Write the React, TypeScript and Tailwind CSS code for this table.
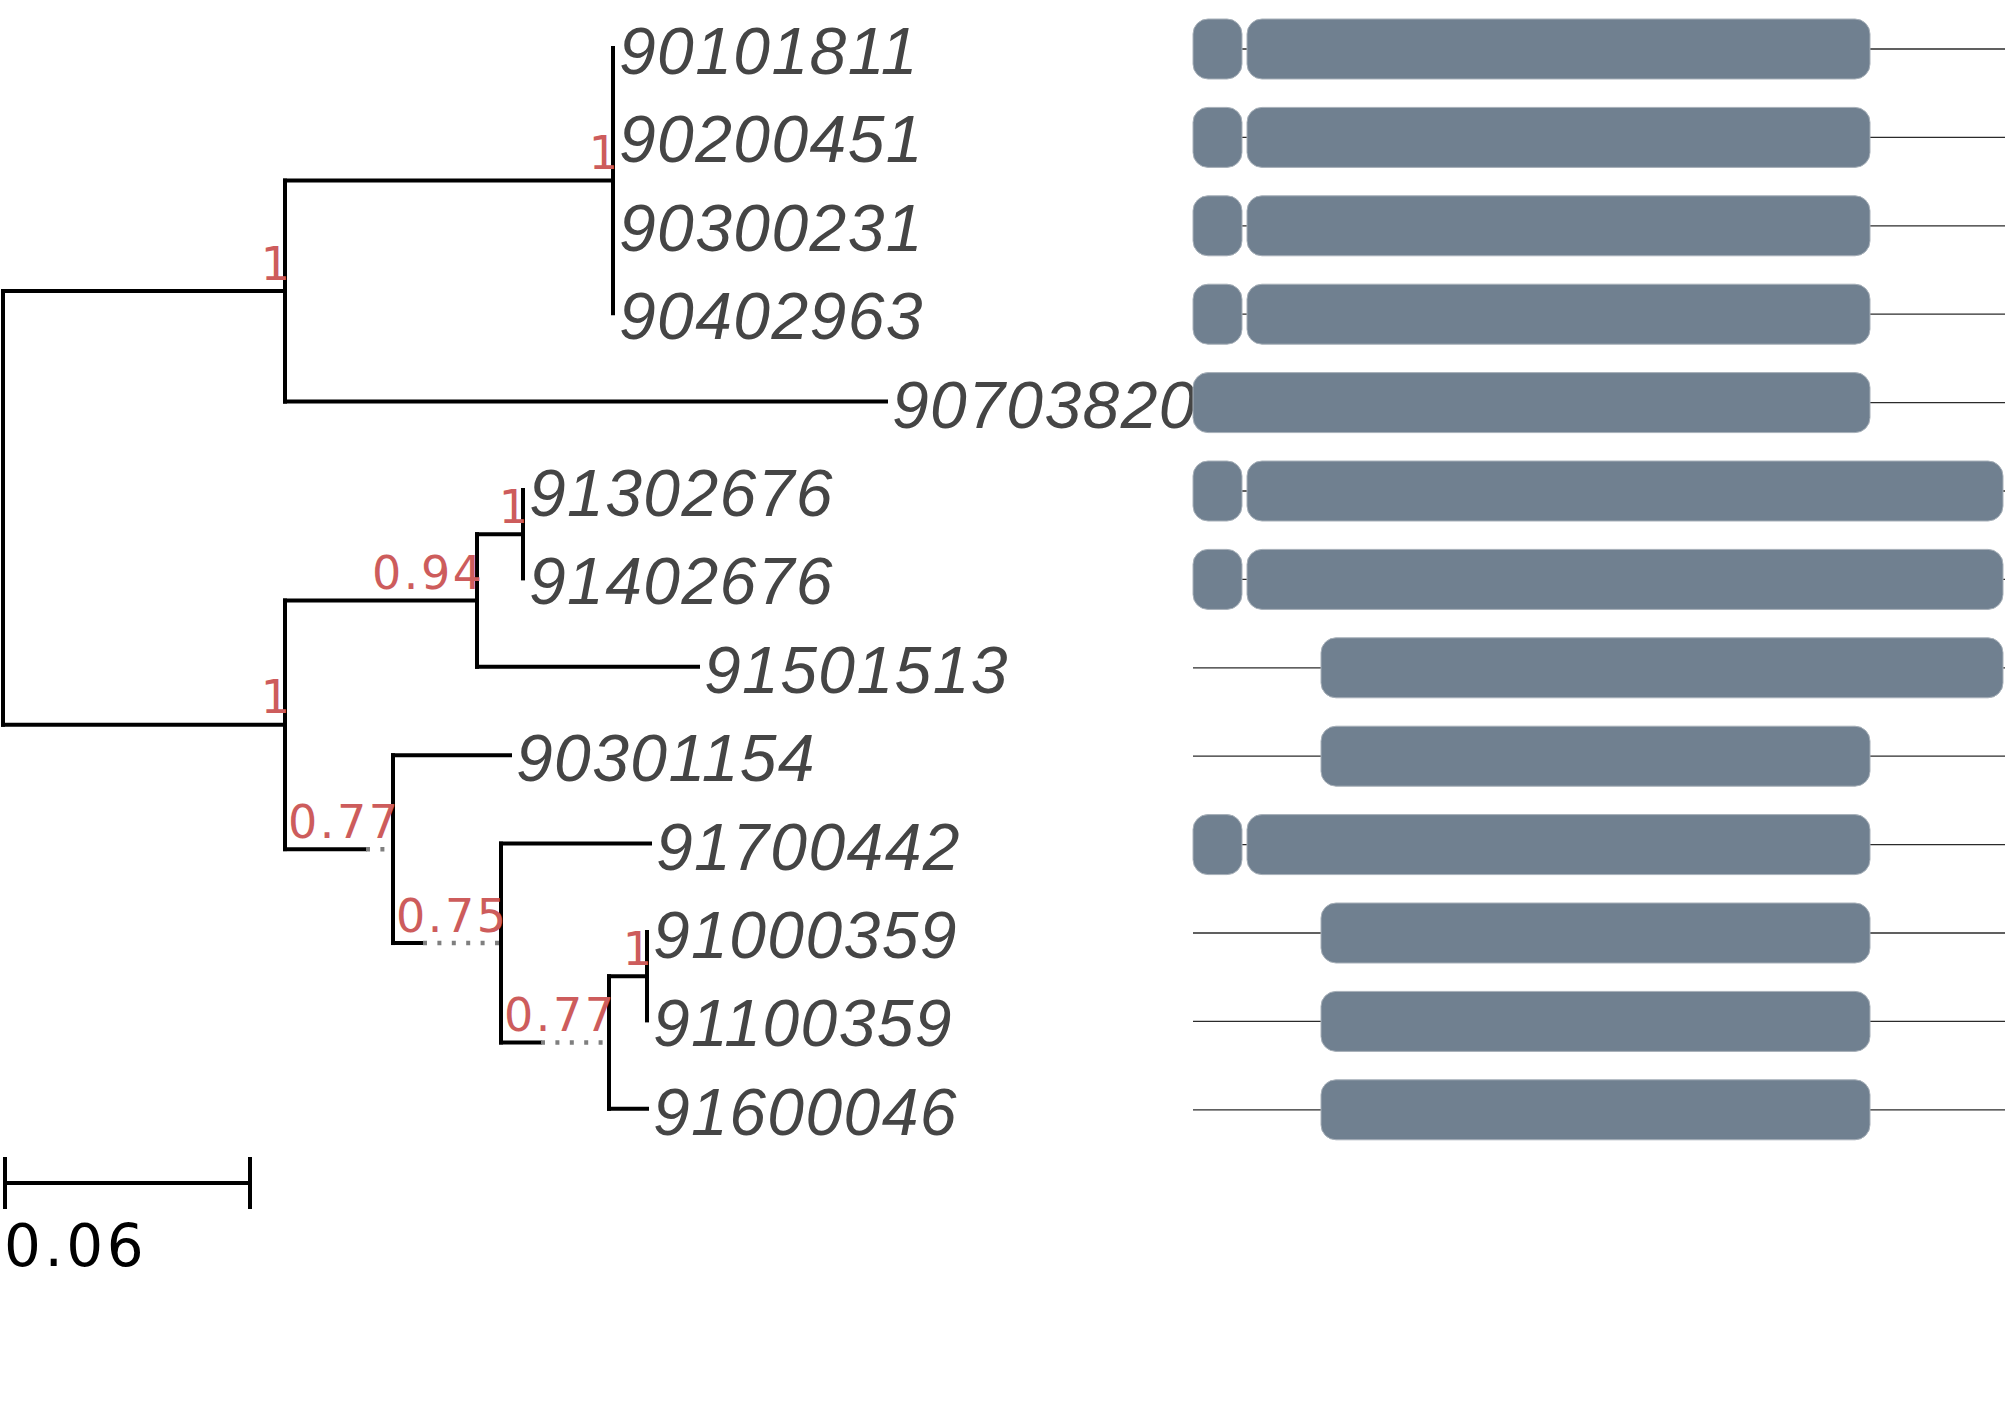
import React from "react";

const rowY = (i: number) => 48 + 88.4 * i;

type Tip = { name: string; end: number; gene: "sb" | "sl" | "one" | "short" | "long" };

const tips: Tip[] = [
  { name: "90101811", end: 613, gene: "sb" },
  { name: "90200451", end: 613, gene: "sb" },
  { name: "90300231", end: 613, gene: "sb" },
  { name: "90402963", end: 613, gene: "sb" },
  { name: "90703820", end: 886, gene: "one" },
  { name: "91302676", end: 523, gene: "sl" },
  { name: "91402676", end: 523, gene: "sl" },
  { name: "91501513", end: 698, gene: "long" },
  { name: "90301154", end: 510, gene: "short" },
  { name: "91700442", end: 650, gene: "sb" },
  { name: "91000359", end: 647, gene: "short" },
  { name: "91100359", end: 647, gene: "short" },
  { name: "91600046", end: 647, gene: "short" },
];

const yB = (rowY(0) + rowY(3)) / 2;
const yA = (yB + rowY(4)) / 2;
const yE = (rowY(5) + rowY(6)) / 2;
const yD = (yE + rowY(7)) / 2;
const yI = (rowY(10) + rowY(11)) / 2;
const yH = (yI + rowY(12)) / 2;
const yG = (rowY(9) + yH) / 2;
const yF = (rowY(8) + yG) / 2;
const yC = (yD + yF) / 2;
const xRoot = 3;
const xA = 285;
const xB = 613;
const xC = 285;
const xD = 477;
const xE = 523;
const xF = 393;
const xG = 501;
const xH = 609;
const xI = 647;

type Seg = [number, number, number, number];

const solid: Seg[] = [
  [xRoot, yA, xRoot, yC],
  [xRoot, yA, xA, yA],
  [xRoot, yC, xC, yC],
  [xA, yB, xA, rowY(4)],
  [xA, yB, xB, yB],
  [xA, rowY(4), 886, rowY(4)],
  [xB, rowY(0), xB, rowY(3)],
  [xC, yD, xC, yF],
  [xC, yD, xD, yD],
  [xC, yF, 365, yF],
  [xD, yE, xD, rowY(7)],
  [xD, yE, xE, yE],
  [xD, rowY(7), 698, rowY(7)],
  [xE, rowY(5), xE, rowY(6)],
  [xF, rowY(8), xF, yG],
  [xF, rowY(8), 510, rowY(8)],
  [xF, yG, 423, yG],
  [xG, rowY(9), xG, yH],
  [xG, rowY(9), 650, rowY(9)],
  [xG, yH, 540, yH],
  [xH, yI, xH, rowY(12)],
  [xH, yI, xI, yI],
  [xH, rowY(12), 647, rowY(12)],
  [xI, rowY(10), xI, rowY(11)],
];

const dotted: Seg[] = [
  [366, yF, 391, yF],
  [423, yG, 499, yG],
  [541, yH, 607, yH],
];

const boots: { x: number; y: number; t: string }[] = [
  { x: xA, y: yA, t: "1" },
  { x: xB, y: yB, t: "1" },
  { x: xC, y: yC, t: "1" },
  { x: xD, y: yD, t: "0.94" },
  { x: xE, y: yE, t: "1" },
  { x: xF, y: yF, t: "0.77" },
  { x: xG, y: yG, t: "0.75" },
  { x: xH, y: yH, t: "0.77" },
  { x: xI, y: yI, t: "1" },
];

const EXON = "#708090";
const EXON_STROKE = "#a7b0b9";

function Gene({ kind, y }: { kind: Tip["gene"]; y: number }) {
  const top = y - 29;
  const h = 60;
  const r = 15;
  const rects: [number, number][] = [];
  if (kind === "sb") {
    rects.push([1193, 1242], [1247, 1870]);
  } else if (kind === "sl") {
    rects.push([1193, 1242], [1247, 2003]);
  } else if (kind === "one") {
    rects.push([1193, 1870]);
  } else if (kind === "long") {
    rects.push([1321, 2003]);
  } else {
    rects.push([1321, 1870]);
  }
  return (
    <g>
      <line x1={1193} y1={y + 1} x2={2005} y2={y + 1} stroke="#2b2b2b" strokeWidth={1.3} />
      {rects.map(([a, b], i) => (
        <rect
          key={i}
          x={a}
          y={top}
          width={b - a}
          height={h}
          rx={r}
          ry={r}
          fill={EXON}
          stroke={EXON_STROKE}
          strokeWidth={1}
        />
      ))}
    </g>
  );
}

export default function App() {
  return (
    <div className="w-[2007px] h-[1404px] bg-white overflow-hidden">
      <svg width={2007} height={1404} viewBox="0 0 2007 1404" className="block">
        {solid.map(([x1, y1, x2, y2], i) => (
          <line
            key={i}
            x1={x1}
            y1={y1}
            x2={x2}
            y2={y2}
            stroke="#000"
            strokeWidth={4}
            strokeLinecap="square"
          />
        ))}
        {dotted.map(([x1, y1, x2, y2], i) => (
          <line
            key={i}
            x1={x1}
            y1={y1}
            x2={x2}
            y2={y2}
            stroke="#7f7f7f"
            strokeWidth={4.5}
            strokeDasharray="4 10.4"
          />
        ))}
        {tips.map((t, i) => (
          <text
            key={t.name}
            x={t.end + 6}
            y={rowY(i) + 26}
            fill="#454545"
            fontSize={66}
            fontStyle="italic"
            letterSpacing={1.4}
            fontFamily="'Liberation Sans', Arial, sans-serif"
          >
            {t.name}
          </text>
        ))}
        {tips.map((t, i) => (
          <Gene key={t.name} kind={t.gene} y={rowY(i)} />
        ))}
        {boots.map((b, i) => (
          <text
            key={i}
            x={b.x + 7.5}
            y={b.y - 11.5}
            fill="#CD5C5C"
            fontSize={46}
            letterSpacing={2.5}
            textAnchor="end"
            fontFamily="'DejaVu Sans', sans-serif"
          >
            {b.t}
          </text>
        ))}
        <line x1={5} y1={1183} x2={250} y2={1183} stroke="#000" strokeWidth={4} />
        <line x1={5} y1={1157} x2={5} y2={1209} stroke="#000" strokeWidth={4} />
        <line x1={250} y1={1157} x2={250} y2={1209} stroke="#000" strokeWidth={4} />
        <text
          x={4}
          y={1266}
          fill="#000"
          fontSize={58}
          letterSpacing={3.5}
          fontFamily="'DejaVu Sans', sans-serif"
        >
          0.06
        </text>
      </svg>
    </div>
  );
}
